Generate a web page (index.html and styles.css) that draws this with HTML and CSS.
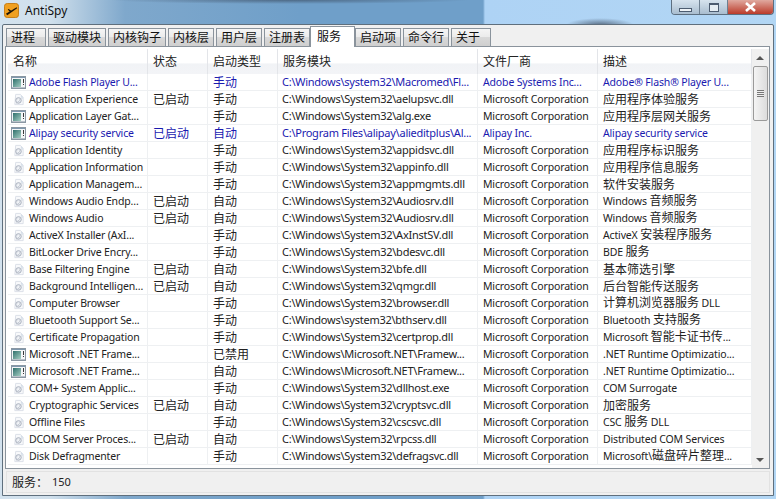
FILE: index.html
```html
<!DOCTYPE html>
<html lang="zh-CN">
<head>
<meta charset="utf-8">
<title>AntiSpy</title>
<link rel="stylesheet" href="styles.css">
</head>
<body>
<svg class="defs" width="0" height="0" aria-hidden="true">
  <symbol id="i-win" viewBox="0 0 15 13">
    <defs>
      <linearGradient id="g-teal" x1="0" y1="0" x2="1" y2="1">
        <stop offset="0" stop-color="#2f6f6c"/>
        <stop offset="1" stop-color="#a5cfc4"/>
      </linearGradient>
    </defs>
    <rect x="0.5" y="0.5" width="14" height="12" fill="#f4f6f7" stroke="#8a97a3"/>
    <rect x="1" y="1" width="13" height="1" fill="#7f98ae"/>
    <rect x="2" y="3" width="8" height="8" fill="url(#g-teal)"/>
    <rect x="12" y="3" width="1" height="4" fill="#3a3a3a"/>
    <rect x="12" y="8" width="1" height="1" fill="#3a3a3a"/>
    <rect x="1" y="11" width="13" height="1" fill="#b9c2ca"/>
  </symbol>
  <symbol id="i-gear" viewBox="0 0 14 14">
    <path d="M4 1.500h5l3 3v8H3z" fill="#f8f9fb" stroke="#d9dee6"/>
    <circle cx="7" cy="8" r="3" fill="#e6e9ef" stroke="#a5adba"/>
    <circle cx="7" cy="8" r="1" fill="#fff"/>
    <path d="M9.500 3.500l2 2" stroke="#b6c8da"/>
    <path d="M5 11.500l5-6" stroke="#c0c7d0"/>
  </symbol>
</svg>
<div class="window">
  <header class="titlebar">
    <svg class="appicon" width="15" height="15" viewBox="0 0 16 16" aria-hidden="true">
      <rect x="0.500" y="0.500" width="15" height="15" rx="3" fill="#f0a020" stroke="#c47a10"/>
      <path d="M2 11.500L13.500 4.500 14 5.500 6.500 11 3.500 13z" fill="#1c1408"/>
      <path d="M5 6.500l3 2-1.500 1-2.500-2.500z" fill="#1c1408"/>
    </svg>
    <span class="apptitle">AntiSpy</span>
    <div class="controls">
      <div class="ctl ctl-min"><span class="glyph-min"></span></div>
      <div class="ctl ctl-max"><span class="glyph-max"></span></div>
      <div class="ctl ctl-close"><svg width="13" height="10" viewBox="0 0 13 10" aria-hidden="true"><path d="M2 1l9 8M11 1l-9 8" stroke="#fff" stroke-width="2.600"/></svg></div>
    </div>
  </header>
  <div class="client">
    <nav class="tabs">
      <span class="tab">进程</span>
      <span class="tab">驱动模块</span>
      <span class="tab">内核钩子</span>
      <span class="tab">内核层</span>
      <span class="tab">用户层</span>
      <span class="tab">注册表</span>
      <span class="tab active">服务</span>
      <span class="tab">启动项</span>
      <span class="tab">命令行</span>
      <span class="tab">关于</span>
    </nav>
    <div class="panel">
      <div class="list">
        <div class="head">
          <span>名称</span><span>状态</span><span>启动类型</span><span>服务模块</span><span>文件厂商</span><span>描述</span>
        </div>
        <div class="row blue"><span class="name"><svg class="ico"><use href="#i-win"/></svg>Adobe Flash Player U...</span><span class="zh"></span><span class="zh">手动</span><span class="path">C:\Windows\system32\Macromed\Fl...</span><span>Adobe Systems Inc...</span><span>Adobe® Flash® Player U...</span></div>
        <div class="row"><span class="name"><svg class="ico"><use href="#i-gear"/></svg>Application Experience</span><span class="zh">已启动</span><span class="zh">手动</span><span class="path">C:\Windows\System32\aelupsvc.dll</span><span>Microsoft Corporation</span><span class="zh">应用程序体验服务</span></div>
        <div class="row"><span class="name"><svg class="ico"><use href="#i-win"/></svg>Application Layer Gat...</span><span class="zh"></span><span class="zh">手动</span><span class="path">C:\Windows\System32\alg.exe</span><span>Microsoft Corporation</span><span class="zh">应用程序层网关服务</span></div>
        <div class="row blue"><span class="name"><svg class="ico"><use href="#i-win"/></svg>Alipay security service</span><span class="zh">已启动</span><span class="zh">自动</span><span class="path">C:\Program Files\alipay\alieditplus\Al...</span><span>Alipay Inc.</span><span>Alipay security service</span></div>
        <div class="row"><span class="name"><svg class="ico"><use href="#i-gear"/></svg>Application Identity</span><span class="zh"></span><span class="zh">手动</span><span class="path">C:\Windows\System32\appidsvc.dll</span><span>Microsoft Corporation</span><span class="zh">应用程序标识服务</span></div>
        <div class="row"><span class="name"><svg class="ico"><use href="#i-gear"/></svg>Application Information</span><span class="zh"></span><span class="zh">手动</span><span class="path">C:\Windows\System32\appinfo.dll</span><span>Microsoft Corporation</span><span class="zh">应用程序信息服务</span></div>
        <div class="row"><span class="name"><svg class="ico"><use href="#i-gear"/></svg>Application Managem...</span><span class="zh"></span><span class="zh">手动</span><span class="path">C:\Windows\System32\appmgmts.dll</span><span>Microsoft Corporation</span><span class="zh">软件安装服务</span></div>
        <div class="row"><span class="name"><svg class="ico"><use href="#i-gear"/></svg>Windows Audio Endp...</span><span class="zh">已启动</span><span class="zh">自动</span><span class="path">C:\Windows\System32\Audiosrv.dll</span><span>Microsoft Corporation</span><span>Windows <i>音频服务</i></span></div>
        <div class="row"><span class="name"><svg class="ico"><use href="#i-gear"/></svg>Windows Audio</span><span class="zh">已启动</span><span class="zh">自动</span><span class="path">C:\Windows\System32\Audiosrv.dll</span><span>Microsoft Corporation</span><span>Windows <i>音频服务</i></span></div>
        <div class="row"><span class="name"><svg class="ico"><use href="#i-gear"/></svg>ActiveX Installer (AxI...</span><span class="zh"></span><span class="zh">手动</span><span class="path">C:\Windows\System32\AxInstSV.dll</span><span>Microsoft Corporation</span><span>ActiveX <i>安装程序服务</i></span></div>
        <div class="row"><span class="name"><svg class="ico"><use href="#i-gear"/></svg>BitLocker Drive Encry...</span><span class="zh"></span><span class="zh">手动</span><span class="path">C:\Windows\System32\bdesvc.dll</span><span>Microsoft Corporation</span><span>BDE <i>服务</i></span></div>
        <div class="row"><span class="name"><svg class="ico"><use href="#i-gear"/></svg>Base Filtering Engine</span><span class="zh">已启动</span><span class="zh">自动</span><span class="path">C:\Windows\System32\bfe.dll</span><span>Microsoft Corporation</span><span class="zh">基本筛选引擎</span></div>
        <div class="row"><span class="name"><svg class="ico"><use href="#i-gear"/></svg>Background Intelligen...</span><span class="zh">已启动</span><span class="zh">自动</span><span class="path">C:\Windows\System32\qmgr.dll</span><span>Microsoft Corporation</span><span class="zh">后台智能传送服务</span></div>
        <div class="row"><span class="name"><svg class="ico"><use href="#i-gear"/></svg>Computer Browser</span><span class="zh"></span><span class="zh">手动</span><span class="path">C:\Windows\System32\browser.dll</span><span>Microsoft Corporation</span><span><i>计算机浏览器服务</i> DLL</span></div>
        <div class="row"><span class="name"><svg class="ico"><use href="#i-gear"/></svg>Bluetooth Support Se...</span><span class="zh"></span><span class="zh">手动</span><span class="path">C:\Windows\system32\bthserv.dll</span><span>Microsoft Corporation</span><span>Bluetooth <i>支持服务</i></span></div>
        <div class="row"><span class="name"><svg class="ico"><use href="#i-gear"/></svg>Certificate Propagation</span><span class="zh"></span><span class="zh">手动</span><span class="path">C:\Windows\System32\certprop.dll</span><span>Microsoft Corporation</span><span>Microsoft <i>智能卡证书传</i>...</span></div>
        <div class="row"><span class="name"><svg class="ico"><use href="#i-win"/></svg>Microsoft .NET Frame...</span><span class="zh"></span><span class="zh">已禁用</span><span class="path">C:\Windows\Microsoft.NET\Framew...</span><span>Microsoft Corporation</span><span>.NET Runtime Optimizatio...</span></div>
        <div class="row"><span class="name"><svg class="ico"><use href="#i-win"/></svg>Microsoft .NET Frame...</span><span class="zh"></span><span class="zh">自动</span><span class="path">C:\Windows\Microsoft.NET\Framew...</span><span>Microsoft Corporation</span><span>.NET Runtime Optimizatio...</span></div>
        <div class="row"><span class="name"><svg class="ico"><use href="#i-gear"/></svg>COM+ System Applic...</span><span class="zh"></span><span class="zh">手动</span><span class="path">C:\Windows\System32\dllhost.exe</span><span>Microsoft Corporation</span><span>COM Surrogate</span></div>
        <div class="row"><span class="name"><svg class="ico"><use href="#i-gear"/></svg>Cryptographic Services</span><span class="zh">已启动</span><span class="zh">自动</span><span class="path">C:\Windows\System32\cryptsvc.dll</span><span>Microsoft Corporation</span><span class="zh">加密服务</span></div>
        <div class="row"><span class="name"><svg class="ico"><use href="#i-gear"/></svg>Offline Files</span><span class="zh"></span><span class="zh">手动</span><span class="path">C:\Windows\System32\cscsvc.dll</span><span>Microsoft Corporation</span><span>CSC <i>服务</i> DLL</span></div>
        <div class="row"><span class="name"><svg class="ico"><use href="#i-gear"/></svg>DCOM Server Proces...</span><span class="zh">已启动</span><span class="zh">自动</span><span class="path">C:\Windows\System32\rpcss.dll</span><span>Microsoft Corporation</span><span>Distributed COM Services</span></div>
        <div class="row"><span class="name"><svg class="ico"><use href="#i-gear"/></svg>Disk Defragmenter</span><span class="zh"></span><span class="zh">手动</span><span class="path">C:\Windows\System32\defragsvc.dll</span><span>Microsoft Corporation</span><span>Microsoft\<i>磁盘碎片整理</i>...</span></div>
      </div>
      <div class="scrollbar">
        <span class="arrow arrow-up"></span>
        <div class="track"><div class="thumb"><span class="grip"></span></div></div>
        <span class="arrow arrow-down"></span>
      </div>
    </div>
    <footer class="status"><span class="status-label">服务：</span><span class="count">150</span></footer>
  </div>
</div>
</body>
</html>
```

FILE: styles.css
```css
html, body {
  margin: 0;
  padding: 0;
  width: 776px;
  height: 499px;
  overflow: hidden;
}
body {
  background: #b5d2ea;
  font-family: "Noto Sans", "Noto Sans CJK SC", sans-serif;
  font-size: 10.5px;
  color: #222;
}
.defs { position: absolute; }
.window {
  width: 776px;
  height: 499px;
  box-sizing: border-box;
  padding: 0 2px 3px 2px;
  display: flex;
  flex-direction: column;
  background:
    radial-gradient(ellipse 34px 7px at 600px 25px, rgba(60,75,95,.75), transparent),
    radial-gradient(ellipse 180px 4px at 290px 0, rgba(55,70,90,.6), transparent),
    linear-gradient(90deg, #d3e2ee 0, #d0e0ec 50px, #7fa8cc 125px, #6f9fc9 300px, #6f9fc9 483px, #aed3f5 485px, #b2d6f4 100%);
}
.titlebar {
  height: 24px;
  display: flex;
  align-items: center;
  flex: none;
  padding-left: 2px;
}
.appicon { margin-top: -3px; flex: none; }
.apptitle {
  margin-left: 6px;
  margin-top: -4px;
  font-size: 12px;
  color: #111;
}
.controls {
  margin-left: auto;
  align-self: flex-start;
  display: flex;
  height: 14px;
  border: 1px solid #5d6f80;
  border-top: 0;
  border-radius: 0 0 4px 4px;
  overflow: hidden;
}
.ctl {
  display: flex;
  align-items: center;
  justify-content: center;
  background: linear-gradient(#d6e3ee, #a9bdcf);
  border-right: 1px solid #6e8091;
  width: 27px;
}
.ctl-close {
  width: 45px;
  border-right: 0;
  background: linear-gradient(#e0a99f, #bb3b2a);
}
.glyph-min {
  width: 13px;
  height: 4px;
  margin-top: 5px;
  background: #eef3f7;
  border: 1px solid #4c5c70;
  box-sizing: border-box;
}
.glyph-max {
  width: 10px;
  height: 9px;
  border: 1px solid #4c5c70;
  border-top-width: 2px;
  box-sizing: border-box;
  background: #e6eef4;
}
.client {
  flex: 1;
  min-height: 0;
  display: flex;
  flex-direction: column;
  box-sizing: border-box;
  background: #f0f0f0;
  border: 1px solid #5f6f7d;
  border-radius: 2px 2px 0 0;
  padding: 2px 3px 2px 2px;
}
.tabs {
  display: flex;
  height: 19px;
  flex: none;
  align-items: flex-end;
  gap: 2px;
  padding-left: 1px;
}
.tab {
  height: 18px;
  min-width: 40px;
  line-height: 15px;
  box-sizing: border-box;
  padding: 0 4px;
  font-size: 12px;
  font-family: "Noto Sans CJK SC", sans-serif;
  background: linear-gradient(#f5f5f5 0, #ececec 45%, #d9d9d9 50%, #cfcfcf 100%);
  border: 1px solid #8a939c;
  border-bottom: 0;
  color: #111;
}
.tab.active {
  height: 21px;
  min-width: 45px;
  margin: 0 -2px -1px;
  padding: 0 6px;
  line-height: 17px;
  background: #fff;
  position: relative;
  z-index: 1;
}
.panel {
  flex: 1;
  min-height: 0;
  display: flex;
  border: 1px solid #8a939c;
  padding: 2px 0 0 2px;
  background: #fff;
  overflow: hidden;
}
.list { width: 744px; flex: none; overflow: hidden; }
.head, .row {
  display: grid;
  grid-template-columns: 140px 60px 70px 200px 120px 154px;
}
.head {
  height: 25px;
  box-sizing: border-box;
  align-items: center;
  background: linear-gradient(#fff 0, #fff 55%, #f1f3f6 60%, #f3f4f7 100%);
  font-family: "Noto Sans CJK SC", sans-serif;
  font-size: 12px;
  color: #222;
}
.head span {
  height: 100%;
  line-height: 23px;
  padding-left: 5px;
  box-sizing: border-box;
  border-right: 1px solid #e3e5e9;
}
.row {
  height: 17px;
  line-height: 16px;
  box-sizing: border-box;
  border-bottom: 1px solid #eef0f2;
  color: #222;
}
.row > span {
  padding-left: 5px;
  box-sizing: border-box;
  border-right: 1px solid #eef0f2;
  white-space: nowrap;
  letter-spacing: -0.15px;
}
.row i {
  font-style: normal;
  font-size: 12px;
  line-height: 14px;
  letter-spacing: 0;
  font-family: "Noto Sans CJK SC", sans-serif;
}
.row > .zh {
  font-size: 12px;
  letter-spacing: 0;
  font-family: "Noto Sans CJK SC", sans-serif;
}
.row > .path {
  padding-left: 4px;
  font-size: 11px;
  letter-spacing: -0.25px;
}
.row > .name {
  padding-left: 3px;
  display: flex;
  align-items: center;
  gap: 3px;
}
.blue > span { color: #1a1ab0; }
.ico { width: 15px; height: 13px; flex: none; }
.scrollbar {
  width: 17px;
  flex: none;
  display: flex;
  flex-direction: column;
  background: #f0f0f0;
}
.arrow { height: 17px; flex: none; position: relative; }
.arrow::after {
  content: "";
  position: absolute;
  left: 4px;
  border: 4px solid transparent;
}
.arrow-up::after { top: 3px; border-bottom: 4px solid #555; }
.arrow-down::after { top: 7px; border-top: 4px solid #555; }
.track { flex: 1; }
.thumb {
  height: 55px;
  box-sizing: border-box;
  margin: 0 1px;
  border: 1px solid #9a9a9a;
  border-radius: 2px;
  background: linear-gradient(90deg, #f4f4f4, #dcdcdc);
  display: flex;
  align-items: center;
  justify-content: center;
}
.grip {
  width: 7px;
  height: 7px;
  background: repeating-linear-gradient(#777 0, #777 1px, #eee 1px, #eee 2px);
}
.status {
  height: 22px;
  flex: none;
  box-sizing: border-box;
  margin: 2px 0 0 1px;
  padding: 0 0 2px 5px;
  display: flex;
  align-items: center;
  background: #f0f0f0;
  border: 1px solid #e2e2e2;
  font-size: 12px;
  font-family: "Noto Sans CJK SC", sans-serif;
}
.status-label { width: 40px; }
.count { font-family: "Noto Sans", sans-serif; font-size: 11px; }
```
